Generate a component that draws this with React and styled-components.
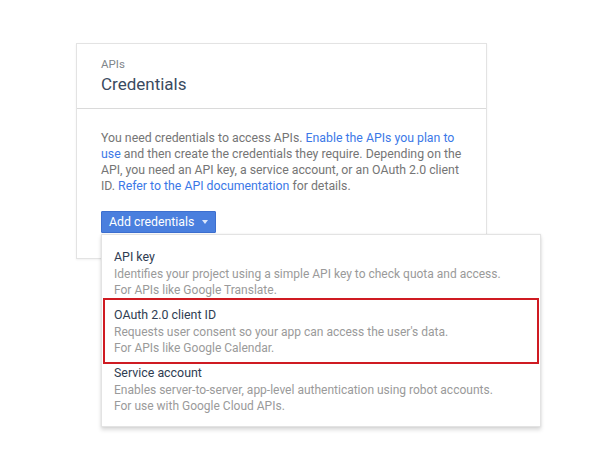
import React from "react";
import styled, { createGlobalStyle } from "styled-components";

const Global = createGlobalStyle`
  html, body { margin: 0; padding: 0; background: #ffffff; }
  body { font-family: Roboto, "Noto Sans", "Liberation Sans", sans-serif; -webkit-font-smoothing: antialiased; }
`;

const Page = styled.div`
  padding: 43px 0 0 76px;
  width: 604px;
  height: 469px;
  box-sizing: border-box;
`;

const Card = styled.div`
  width: 411px;
  box-sizing: border-box;
  border: 1px solid #e3e3e3;
  box-shadow: 0 1px 2px rgba(0, 0, 0, 0.06);
  background: #fff;
`;

const Header = styled.div`
  padding: 13px 24px 13px;
  border-bottom: 1px solid #dadada;
`;

const Eyebrow = styled.div`
  font-size: 11.5px;
  line-height: 14px;
  color: #80868b;
`;

const Title = styled.div`
  font-size: 17px;
  line-height: 22px;
  color: #3a4a60;
  margin-top: 2px;
`;

const Body = styled.div`
  padding: 21px 24px 25px;
`;

const Text = styled.p`
  margin: 0;
  font-size: 12.3px;
  line-height: 16px;
  color: #757575;
`;

const Link = styled.a`
  color: #3b78e7;
  text-decoration: none;
`;

const MenuAnchor = styled.div`
  position: relative;
  margin-top: 17px;
  width: fit-content;
`;

const Button = styled.button`
  display: flex;
  align-items: center;
  gap: 8px;
  height: 22px;
  padding: 0 7px 0 7px;
  border: 1px solid #3d6fcf;
  border-radius: 1px;
  background: #4a7fde;
  color: #fff;
  font-family: inherit;
  font-size: 12.3px;
  cursor: pointer;
`;

const Caret = styled.span`
  width: 0;
  height: 0;
  border-left: 3.5px solid transparent;
  border-right: 3.5px solid transparent;
  border-top: 4px solid #dbe6fb;
`;

const Menu = styled.div`
  position: absolute;
  top: 23px;
  left: 0;
  width: 440px;
  box-sizing: border-box;
  padding: 9px 0 8px;
  background: #fff;
  border: 1px solid #e3e3e3;
  box-shadow: 0 3px 4px rgba(0, 0, 0, 0.14), 0 0 2px rgba(0, 0, 0, 0.08);
`;

const Item = styled.div`
  position: relative;
  padding: 4px 13px 4px 12px;
  ${(p) =>
    p.$highlight &&
    `&::after {
      content: "";
      position: absolute;
      top: -4px;
      bottom: -4px;
      left: 1px;
      right: 1px;
      border: 2px solid #cf1b22;
      pointer-events: none;
    }`}
`;

const ItemTitle = styled.div`
  font-size: 12.4px;
  line-height: 18px;
  color: #2f3d52;
`;

const ItemDesc = styled.div`
  font-size: 12px;
  line-height: 16px;
  color: #9a9a9a;
`;

const items = [
  {
    title: "API key",
    lines: [
      "Identifies your project using a simple API key to check quota and access.",
      "For APIs like Google Translate.",
    ],
  },
  {
    title: "OAuth 2.0 client ID",
    lines: [
      "Requests user consent so your app can access the user's data.",
      "For APIs like Google Calendar.",
    ],
    highlight: true,
  },
  {
    title: "Service account",
    lines: [
      "Enables server-to-server, app-level authentication using robot accounts.",
      "For use with Google Cloud APIs.",
    ],
  },
];

export default function App() {
  return (
    <>
      <Global />
      <Page>
        <Card>
          <Header>
            <Eyebrow>APIs</Eyebrow>
            <Title>Credentials</Title>
          </Header>
          <Body>
            <Text>
              You need credentials to access APIs.{" "}
              <Link>Enable the APIs you plan to use</Link> and then create the
              credentials they require. Depending on the API, you need an API
              key, a service account, or an OAuth 2.0 client ID.{" "}
              <Link>Refer to the API documentation</Link> for details.
            </Text>
            <MenuAnchor>
              <Button>
                Add credentials
                <Caret />
              </Button>
              <Menu>
                {items.map((it) => (
                  <Item key={it.title} $highlight={it.highlight}>
                    <ItemTitle>{it.title}</ItemTitle>
                    {it.lines.map((l) => (
                      <ItemDesc key={l}>{l}</ItemDesc>
                    ))}
                  </Item>
                ))}
              </Menu>
            </MenuAnchor>
          </Body>
        </Card>
      </Page>
    </>
  );
}
